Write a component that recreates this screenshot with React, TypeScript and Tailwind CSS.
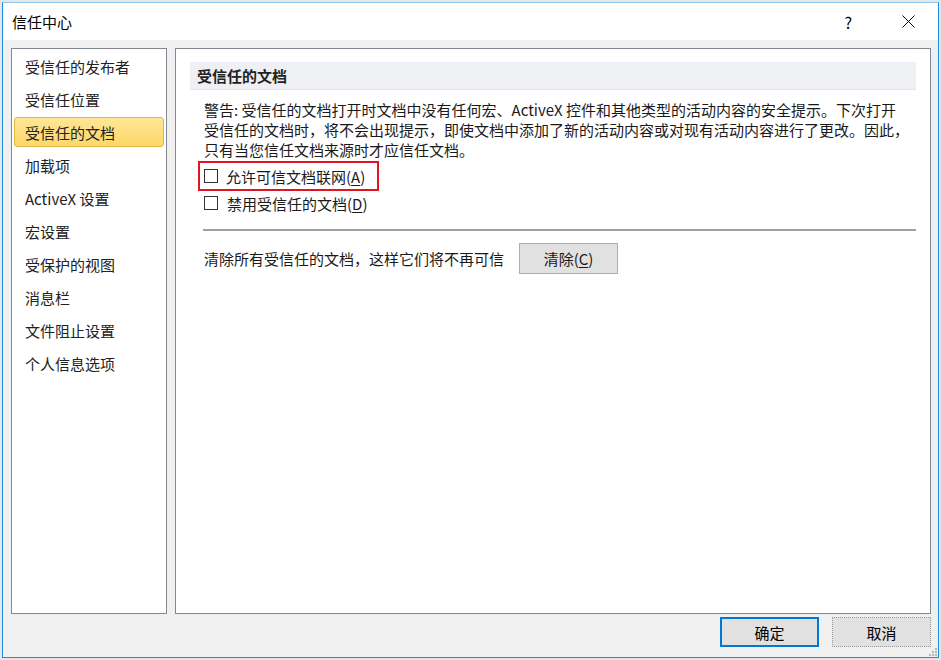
import React from "react";

const font = { fontFamily: '"Noto Sans CJK SC", "Noto Sans", sans-serif' };

const items = [
  "受信任的发布者",
  "受信任位置",
  "受信任的文档",
  "加载项",
  "ActiveX 设置",
  "宏设置",
  "受保护的视图",
  "消息栏",
  "文件阻止设置",
  "个人信息选项",
];

function Checkbox() {
  return <span className="block w-[14px] h-[14px] border border-[#333333] bg-white shrink-0" />;
}

export default function App() {
  return (
    <div className="w-[941px] h-[660px] bg-[#e6e6e6] overflow-hidden text-[#1a1a1a]" style={font}>
      <div className="ml-[2px] mt-[2px] w-[937px] h-[656px] border border-[#1a8ce0] border-t-[#8fc4ec] flex flex-col relative">
        {/* Title bar */}
        <div className="h-[37px] bg-white flex items-center shrink-0">
          <span className="ml-[9px] text-[15px] leading-none text-black">信任中心</span>
          <span className="ml-auto text-[16px] leading-none text-black mr-[50px]">?</span>
          <svg width="13" height="13" viewBox="0 0 13 13" className="mr-[23px]">
            <path d="M0.5 0.5 L12.5 12.5 M12.5 0.5 L0.5 12.5" stroke="#000" strokeWidth="1" />
          </svg>
        </div>
        {/* Body */}
        <div className="flex-1 bg-[#f0f0f0] flex flex-col">
          <div className="flex gap-[8px] pl-[8px] pt-[8px] h-[574px] shrink-0">
            {/* Sidebar */}
            <div className="w-[156px] h-[566px] border border-[#828790] bg-white flex flex-col px-[2px] pt-[0px]">
              {items.map((t, i) => (
                <div
                  key={t}
                  className={
                    i === 2
                      ? "h-[30px] mt-[3px] first:mt-[2px] flex items-center pl-[10px] text-[15px] leading-none rounded-[3px] border border-[#e2b649] bg-gradient-to-b from-[#ffe697] to-[#fdd766] text-[#222]"
                      : "h-[30px] mt-[3px] first:mt-[2px] flex items-center pl-[11px] text-[15px] leading-none text-[#222]"
                  }
                >
                  {t}
                </div>
              ))}
            </div>
            {/* Main panel */}
            <div className="w-[756px] h-[566px] border border-[#828790] bg-white pl-[14px] pt-[13px] pr-[14px]">
              <div className="h-[28px] bg-[#eef0f3] border-b border-[#e2e4e8] flex items-center pl-[7px] text-[15px] font-bold leading-none text-[#222]">
                受信任的文档
              </div>
              <div className="pl-[14px] mt-[10px] text-[15px] leading-[20px] text-[#1a1a1a] whitespace-nowrap">
                <div>警告: 受信任的文档打开时文档中没有任何宏、ActiveX 控件和其他类型的活动内容的安全提示。下次打开</div>
                <div>受信任的文档时，将不会出现提示，即使文档中添加了新的活动内容或对现有活动内容进行了更改。因此，</div>
                <div>只有当您信任文档来源时才应信任文档。</div>
              </div>
              <div className="mt-[1px] ml-[8px] w-[181px] h-[30px] border-2 border-[#e3141f] flex items-center pl-[4px] gap-[8px]">
                <Checkbox />
                <span className="text-[15px] leading-none text-[#1a1a1a]">
                  允许可信文档联网(<span className="underline underline-offset-2">A</span>)
                </span>
              </div>
              <div className="ml-[14px] mt-[1px] h-[22px] flex items-center gap-[9px]">
                <Checkbox />
                <span className="text-[15px] leading-none text-[#1a1a1a]">
                  禁用受信任的文档(<span className="underline underline-offset-2">D</span>)
                </span>
              </div>
              <div className="ml-[13px] mt-[15px] h-[2px] bg-[#a0a0a0]" />
              <div className="ml-[14px] mt-[12px] flex items-center">
                <span className="text-[15px] leading-none text-[#1a1a1a]">清除所有受信任的文档，这样它们将不再可信</span>
                <button className="ml-[15px] w-[99px] h-[31px] bg-[#e1e1e1] border border-[#adadad] text-[15px] leading-none text-[#1a1a1a]" style={font}>
                  清除(<span className="underline underline-offset-2">C</span>)
                </button>
              </div>
            </div>
          </div>
          {/* Footer */}
          <div className="flex justify-end gap-[13px] pr-[7px] mt-[3px]">
            <button className="w-[99px] h-[30px] bg-[#e1e1e1] border-2 border-[#0078d7] text-[15px] leading-none text-black" style={font}>
              确定
            </button>
            <button className="w-[99px] h-[30px] bg-[#e1e1e1] border border-dotted border-[#9a9a9a] text-[15px] leading-none text-black" style={font}>
              取消
            </button>
          </div>
        </div>
        {/* resize grip */}
        <div className="absolute right-[1px] bottom-[1px] w-[10px] h-[10px]">
          <span className="absolute right-[0px] bottom-[0px] w-[2px] h-[2px] bg-[#b8b8b8]" />
          <span className="absolute right-[3px] bottom-[0px] w-[2px] h-[2px] bg-[#b8b8b8]" />
          <span className="absolute right-[6px] bottom-[0px] w-[2px] h-[2px] bg-[#b8b8b8]" />
          <span className="absolute right-[0px] bottom-[3px] w-[2px] h-[2px] bg-[#b8b8b8]" />
          <span className="absolute right-[3px] bottom-[3px] w-[2px] h-[2px] bg-[#b8b8b8]" />
          <span className="absolute right-[0px] bottom-[6px] w-[2px] h-[2px] bg-[#b8b8b8]" />
        </div>
      </div>
    </div>
  );
}
